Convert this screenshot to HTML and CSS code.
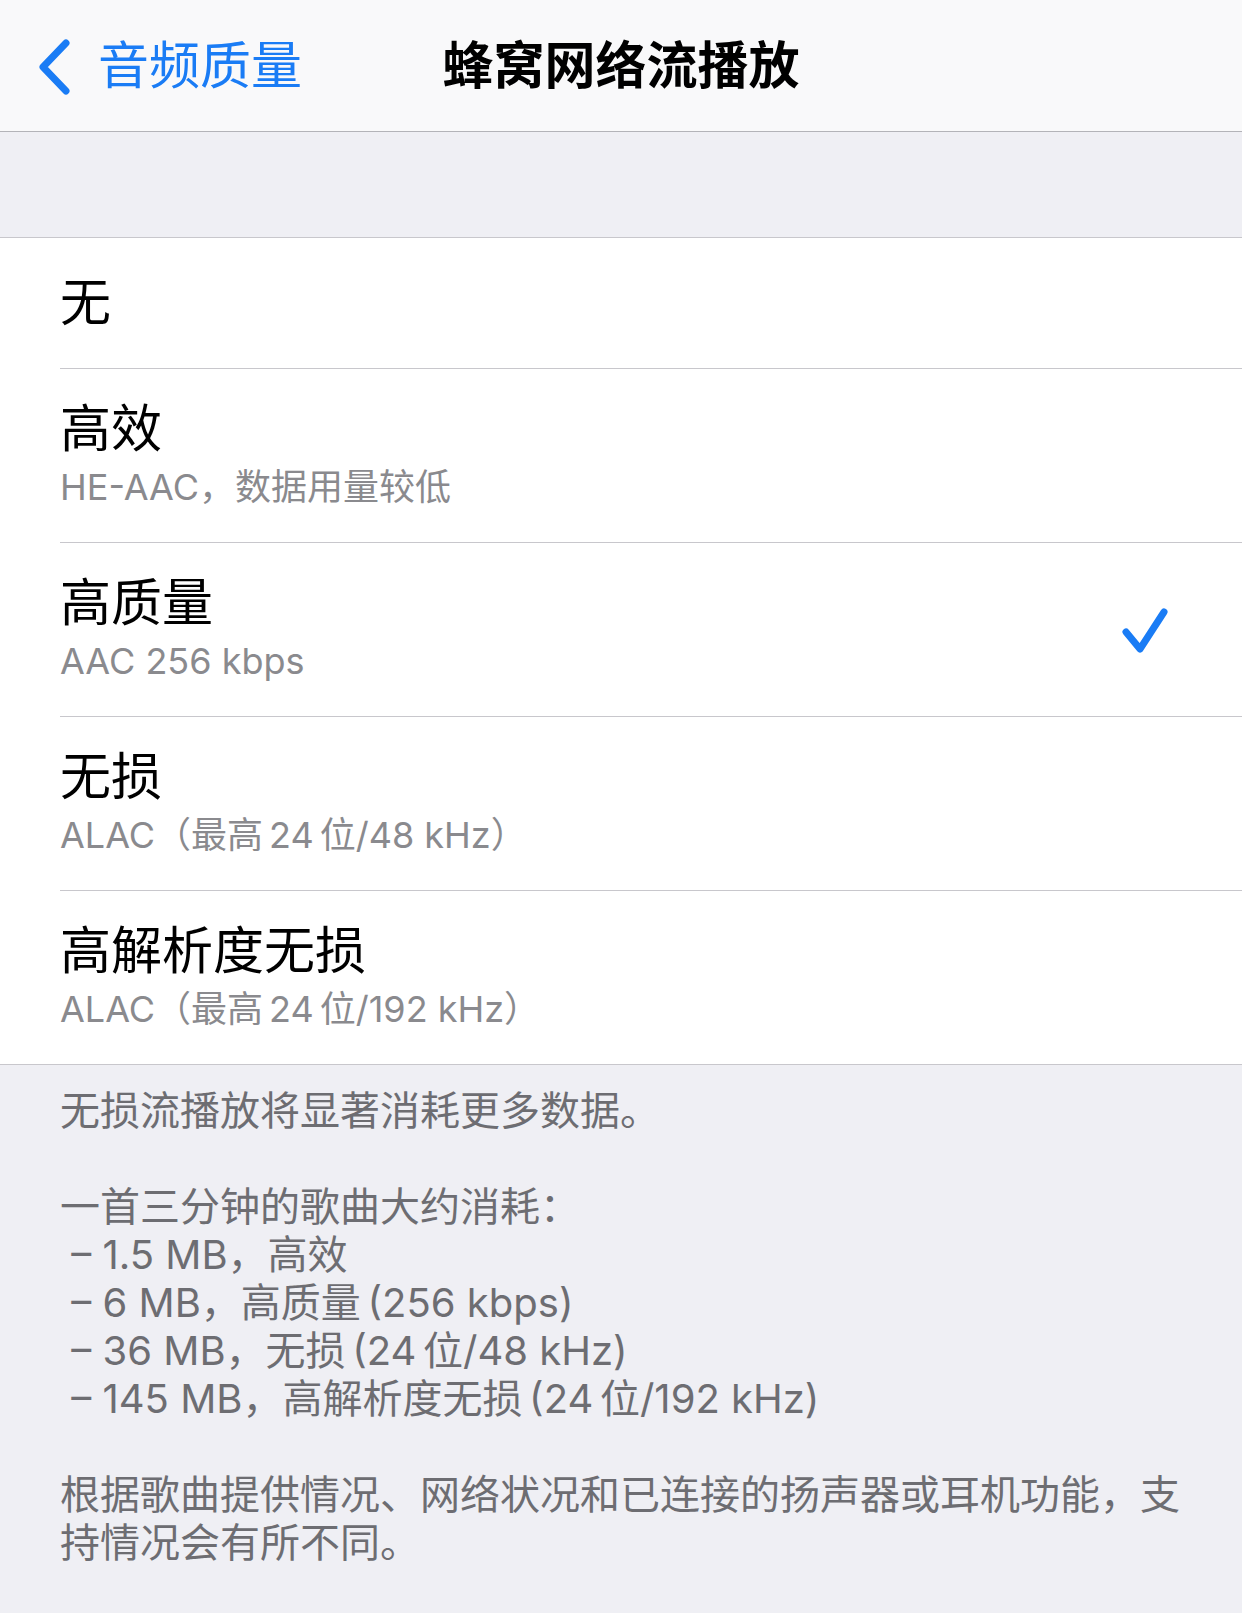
FILE: index.html
```html
<!DOCTYPE html>
<html lang="zh-CN">
<head>
<meta charset="utf-8">
<title>蜂窝网络流播放</title>
<link rel="stylesheet" href="styles.css">
</head>
<body>
<div class="screen">
  <header class="nav">
    <a class="back" href="#">
      <svg class="back-chevron" width="40" height="60" viewBox="0 0 40 60" aria-hidden="true">
        <polyline points="29,6 6,30 29,54" fill="none" stroke="currentColor" stroke-width="7" stroke-linecap="round" stroke-linejoin="round"/>
      </svg>
      <span class="back-label">音频质量</span>
    </a>
    <h1 class="nav-title">蜂窝网络流播放</h1>
    <div class="nav-spacer"></div>
  </header>

  <div class="group-gap"></div>

  <ul class="list">
    <li class="row">
      <div class="row-inner row-plain">
        <span class="row-title">无</span>
      </div>
    </li>
    <li class="row">
      <div class="row-inner">
        <div class="row-text">
          <span class="row-title">高效</span>
          <span class="row-sub">HE-AAC，数据用量较低</span>
        </div>
      </div>
    </li>
    <li class="row">
      <div class="row-inner">
        <div class="row-text">
          <span class="row-title">高质量</span>
          <span class="row-sub">AAC 256 kbps</span>
        </div>
        <svg class="check" width="52" height="52" viewBox="0 0 52 52" aria-hidden="true">
          <polyline points="8,28 22,45 46,8" fill="none" stroke="currentColor" stroke-width="7" stroke-linecap="round" stroke-linejoin="round"/>
        </svg>
      </div>
    </li>
    <li class="row">
      <div class="row-inner">
        <div class="row-text">
          <span class="row-title">无损</span>
          <span class="row-sub">ALAC（最高&#8198;24&#8198;位/48 kHz）</span>
        </div>
      </div>
    </li>
    <li class="row row-last">
      <div class="row-inner">
        <div class="row-text">
          <span class="row-title">高解析度无损</span>
          <span class="row-sub">ALAC（最高&#8198;24&#8198;位/192 kHz）</span>
        </div>
      </div>
    </li>
  </ul>

  <footer class="footnote">
    <p>无损流播放将显著消耗更多数据。</p>
    <p>一首三分钟的歌曲大约消耗：<br>
    &nbsp;– 1.5 MB，高效<br>
    &nbsp;– 6 MB，高质量&#8198;(256 kbps)<br>
    &nbsp;– 36 MB，无损&#8198;(24&#8198;位/48 kHz)<br>
    &nbsp;– 145 MB，高解析度无损&#8198;(24&#8198;位/192 kHz)</p>
    <p>根据歌曲提供情况、网络状况和已连接的扬声器或耳机功能，支持情况会有所不同。</p>
  </footer>
</div>
</body>
</html>
```

FILE: styles.css
```css
* {
  box-sizing: border-box;
}

html, body {
  margin: 0;
  padding: 0;
}

body {
  background: #efeff4;
  font-family: Inter, "Noto Sans CJK SC", sans-serif;
  -webkit-font-smoothing: antialiased;
}

.screen {
  width: 1242px;
  min-height: 1613px;
  background: #efeff4;
}

/* navigation bar */
.nav {
  height: 132px;
  background: #f9f9fa;
  border-bottom: 1px solid #b3b3b8;
  display: grid;
  grid-template-columns: 1fr auto 1fr;
  align-items: center;
}

.back {
  display: flex;
  align-items: center;
  color: #1a7cf5;
  text-decoration: none;
  padding-left: 37px;
  justify-self: start;
}

.back-chevron {
  display: block;
  margin-top: 2px;
}

.back-label {
  font-size: 51px;
  line-height: 60px;
  margin-left: 21px;
}

.nav-title {
  margin: 0;
  font-size: 51px;
  font-weight: 700;
  line-height: 60px;
  color: #000;
}

/* gap above the grouped list */
.group-gap {
  height: 105px;
}

/* list */
.list {
  list-style: none;
  margin: 0;
  padding: 0;
  background: #fff;
  border-top: 1px solid #c8c7cc;
  border-bottom: 1px solid #c8c7cc;
}

.row {
  padding-left: 60px;
}

.row-inner {
  display: flex;
  align-items: center;
  justify-content: space-between;
  height: 174px;
  padding-right: 72px;
  border-bottom: 1px solid #c8c7cc;
}

.row-plain {
  height: 131px;
}

.row-last .row-inner {
  border-bottom: none;
  height: 173px;
}

.row-text {
  display: flex;
  flex-direction: column;
  margin-top: -4px;
}

.row-title {
  font-size: 51px;
  line-height: 60px;
  color: #000;
}

.row-sub {
  font-size: 36px;
  line-height: 44px;
  margin-top: 6px;
  color: #8a8a8e;
}

.check {
  display: block;
  color: #1a7cf5;
}

/* footnote below the list */
.footnote {
  padding: 22px 60px 40px 60px;
  color: #6d6d72;
  font-size: 40px;
  line-height: 48px;
}

.footnote p {
  margin: 0 0 48px 0;
}

.footnote p:last-child {
  margin-bottom: 0;
}
```
